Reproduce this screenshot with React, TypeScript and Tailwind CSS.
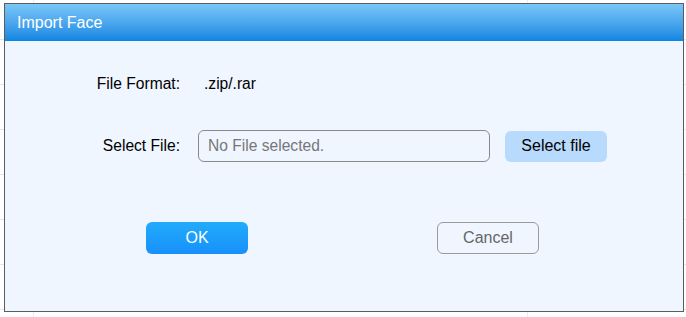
export default function App() {
  const rows = Array.from({ length: 8 });

  return (
    <div className="relative h-[317px] w-[686px] overflow-hidden bg-white font-['Liberation_Sans',Arial,sans-serif]">
      {/* table behind the modal */}
      <div className="-mt-[5px] flex flex-col">
        {rows.map((_, i) => (
          <div key={i} className="flex h-[45px] border-b border-[#e6e6e6]">
            <div className="w-[34px] border-r border-[#ececec]" />
            <div className="w-[494px] border-r border-[#ececec]" />
            <div className="flex-1" />
          </div>
        ))}
      </div>

      {/* dialog */}
      <div className="absolute left-[4px] top-[3px] flex h-[309px] w-[680px] flex-col border border-[#5c5c5c] bg-[#eff6ff]">
        <div className="h-[37px] bg-gradient-to-b from-[#79c7f7] to-[#0886e2] pl-[12px] text-[16px] leading-[37px] text-white">
          Import Face
        </div>

        <div className="flex flex-col text-[15.6px] text-black">
          <div className="mt-[33px] flex h-[20px] items-center leading-[20px]">
            <div className="w-[175px] text-right">File Format:</div>
            <div className="pl-[24px]">.zip/.rar</div>
          </div>

          <div className="mt-[36px] flex items-center">
            <div className="w-[175px] text-right">Select File:</div>
            <div className="ml-[18px] flex h-[32px] w-[292px] items-center rounded-[6px] border border-[#8a8a8a] px-[9px] text-[#777]">
              No File selected.
            </div>
            <button className="ml-[15px] h-[31px] w-[102px] rounded-[6px] bg-[#b8dafd] text-[16px] text-black">
              Select file
            </button>
          </div>

          <div className="mt-[60px] flex">
            <button className="ml-[141px] h-[32px] w-[102px] rounded-[6px] bg-gradient-to-b from-[#22abfc] to-[#1890fa] text-[16px] text-white">
              OK
            </button>
            <button className="ml-[189px] h-[32px] w-[102px] rounded-[6px] border border-[#9a9a9a] text-[16px] text-[#666]">
              Cancel
            </button>
          </div>
        </div>
      </div>
    </div>
  );
}
